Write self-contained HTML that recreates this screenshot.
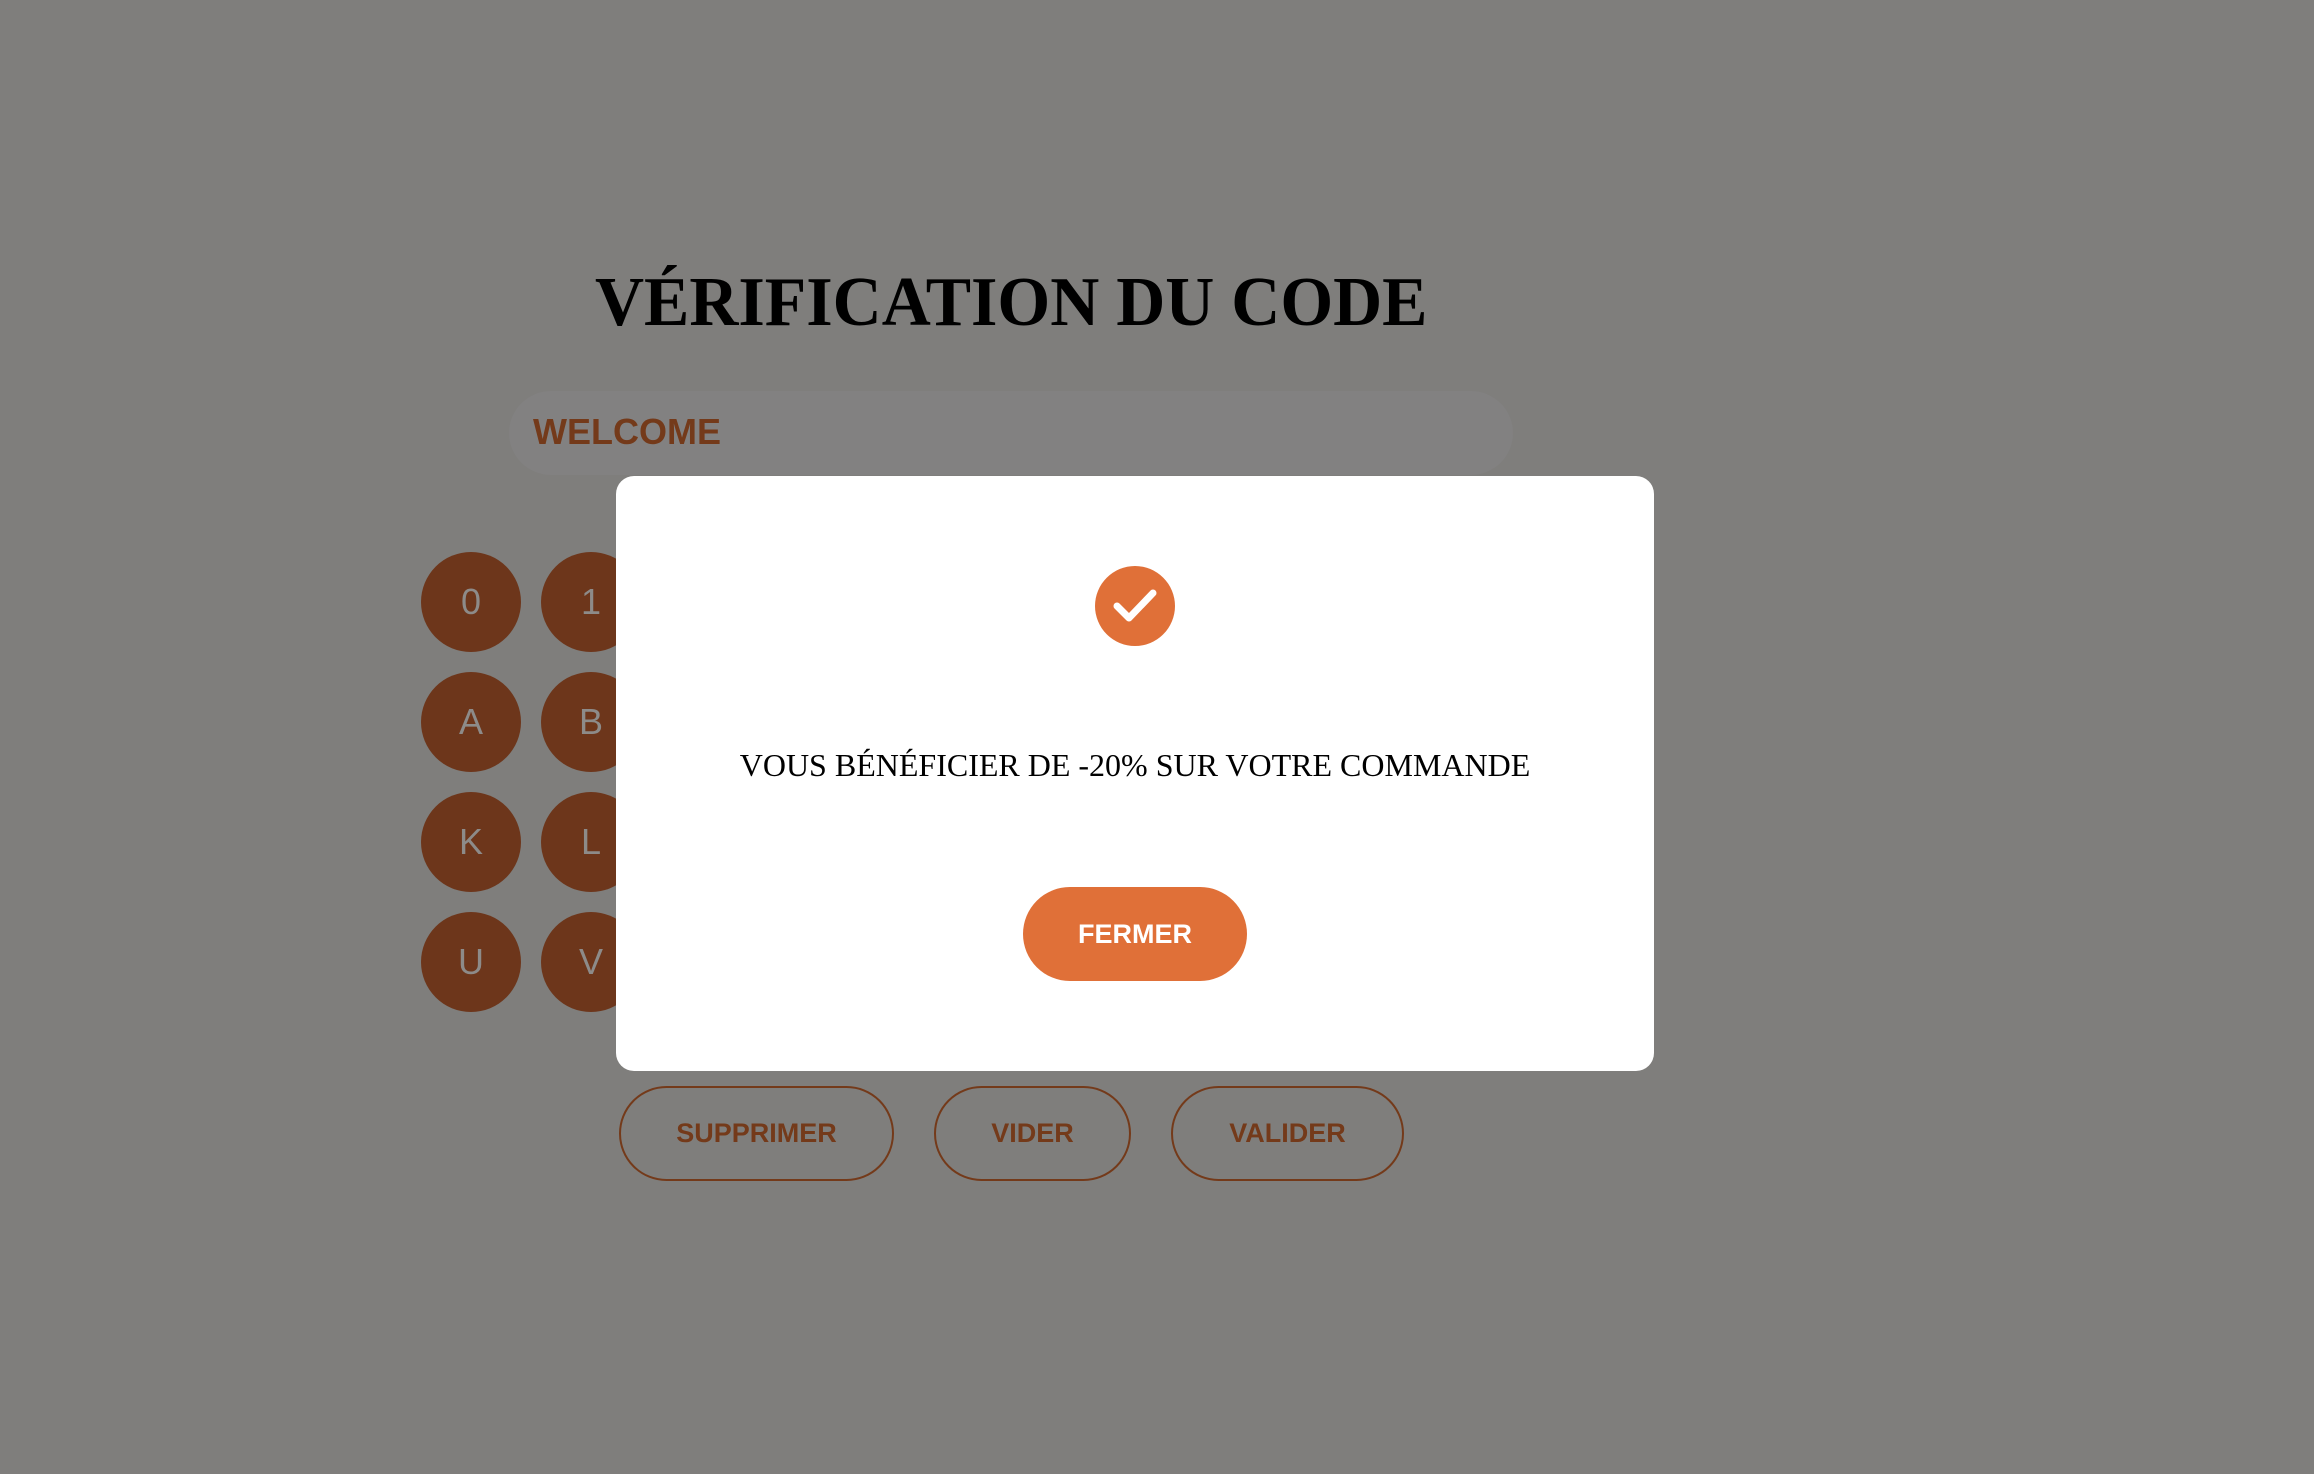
<!DOCTYPE html>
<html><head><meta charset="utf-8"><style>
html,body{margin:0;padding:0}
body{width:2314px;height:1474px;background:#7f7e7c;position:relative;overflow:hidden;font-family:"Liberation Sans",sans-serif}
.title{position:absolute;left:595px;top:268px;font-family:"Liberation Serif",serif;font-weight:bold;font-size:70px;color:#000;white-space:nowrap;line-height:1;transform:scaleX(0.97);transform-origin:0 0}
.input{position:absolute;left:509px;top:391px;width:1004px;height:84px;border-radius:42px;background:#828181}
.welcome{position:absolute;left:533px;top:414px;font-weight:bold;font-size:36px;color:#743a1a;line-height:1}
.c{position:absolute;width:100px;height:100px;border-radius:50%;background:#6d361b;color:#8d8b89;font-size:36px;text-align:center;line-height:100px}
.b{position:absolute;top:1086px;height:91px;border:2px solid #743a1a;border-radius:48px;color:#743a1a;font-weight:bold;font-size:27px;text-align:center;line-height:91px;box-sizing:content-box}
.modal{position:absolute;left:616px;top:476px;width:1038px;height:595px;background:#fff;border-radius:18px}
.chk{position:absolute;left:1095px;top:566px;width:80px;height:80px;border-radius:50%;background:#e07038}
.msg{position:absolute;left:616px;width:1038px;top:747px;text-align:center;font-family:"Liberation Serif",serif;font-size:32px;color:#000}
.fermer{position:absolute;left:1023px;top:887px;width:224px;height:94px;border-radius:47px;background:#e07038;color:#fff;font-weight:bold;font-size:27px;text-align:center;line-height:94px}
</style></head><body>
<div class="title">VÉRIFICATION DU CODE</div>
<div class="input"></div>
<div class="welcome">WELCOME</div>
<div class="c" style="left:421px;top:552px">0</div>
<div class="c" style="left:541px;top:552px">1</div>
<div class="c" style="left:421px;top:672px">A</div>
<div class="c" style="left:541px;top:672px">B</div>
<div class="c" style="left:421px;top:792px">K</div>
<div class="c" style="left:541px;top:792px">L</div>
<div class="c" style="left:421px;top:912px">U</div>
<div class="c" style="left:541px;top:912px">V</div>
<div class="b" style="left:619px;width:271px">SUPPRIMER</div>
<div class="b" style="left:934px;width:193px">VIDER</div>
<div class="b" style="left:1171px;width:229px">VALIDER</div>
<div class="modal"></div>
<div class="chk"><svg width="80" height="80" viewBox="0 0 80 80"><path d="M22 40 L34 52 L58 27" fill="none" stroke="#fff" stroke-width="7" stroke-linecap="round" stroke-linejoin="round"/></svg></div>
<div class="msg">VOUS BÉNÉFICIER DE -20% SUR VOTRE COMMANDE</div>
<div class="fermer">FERMER</div>
</body></html>
